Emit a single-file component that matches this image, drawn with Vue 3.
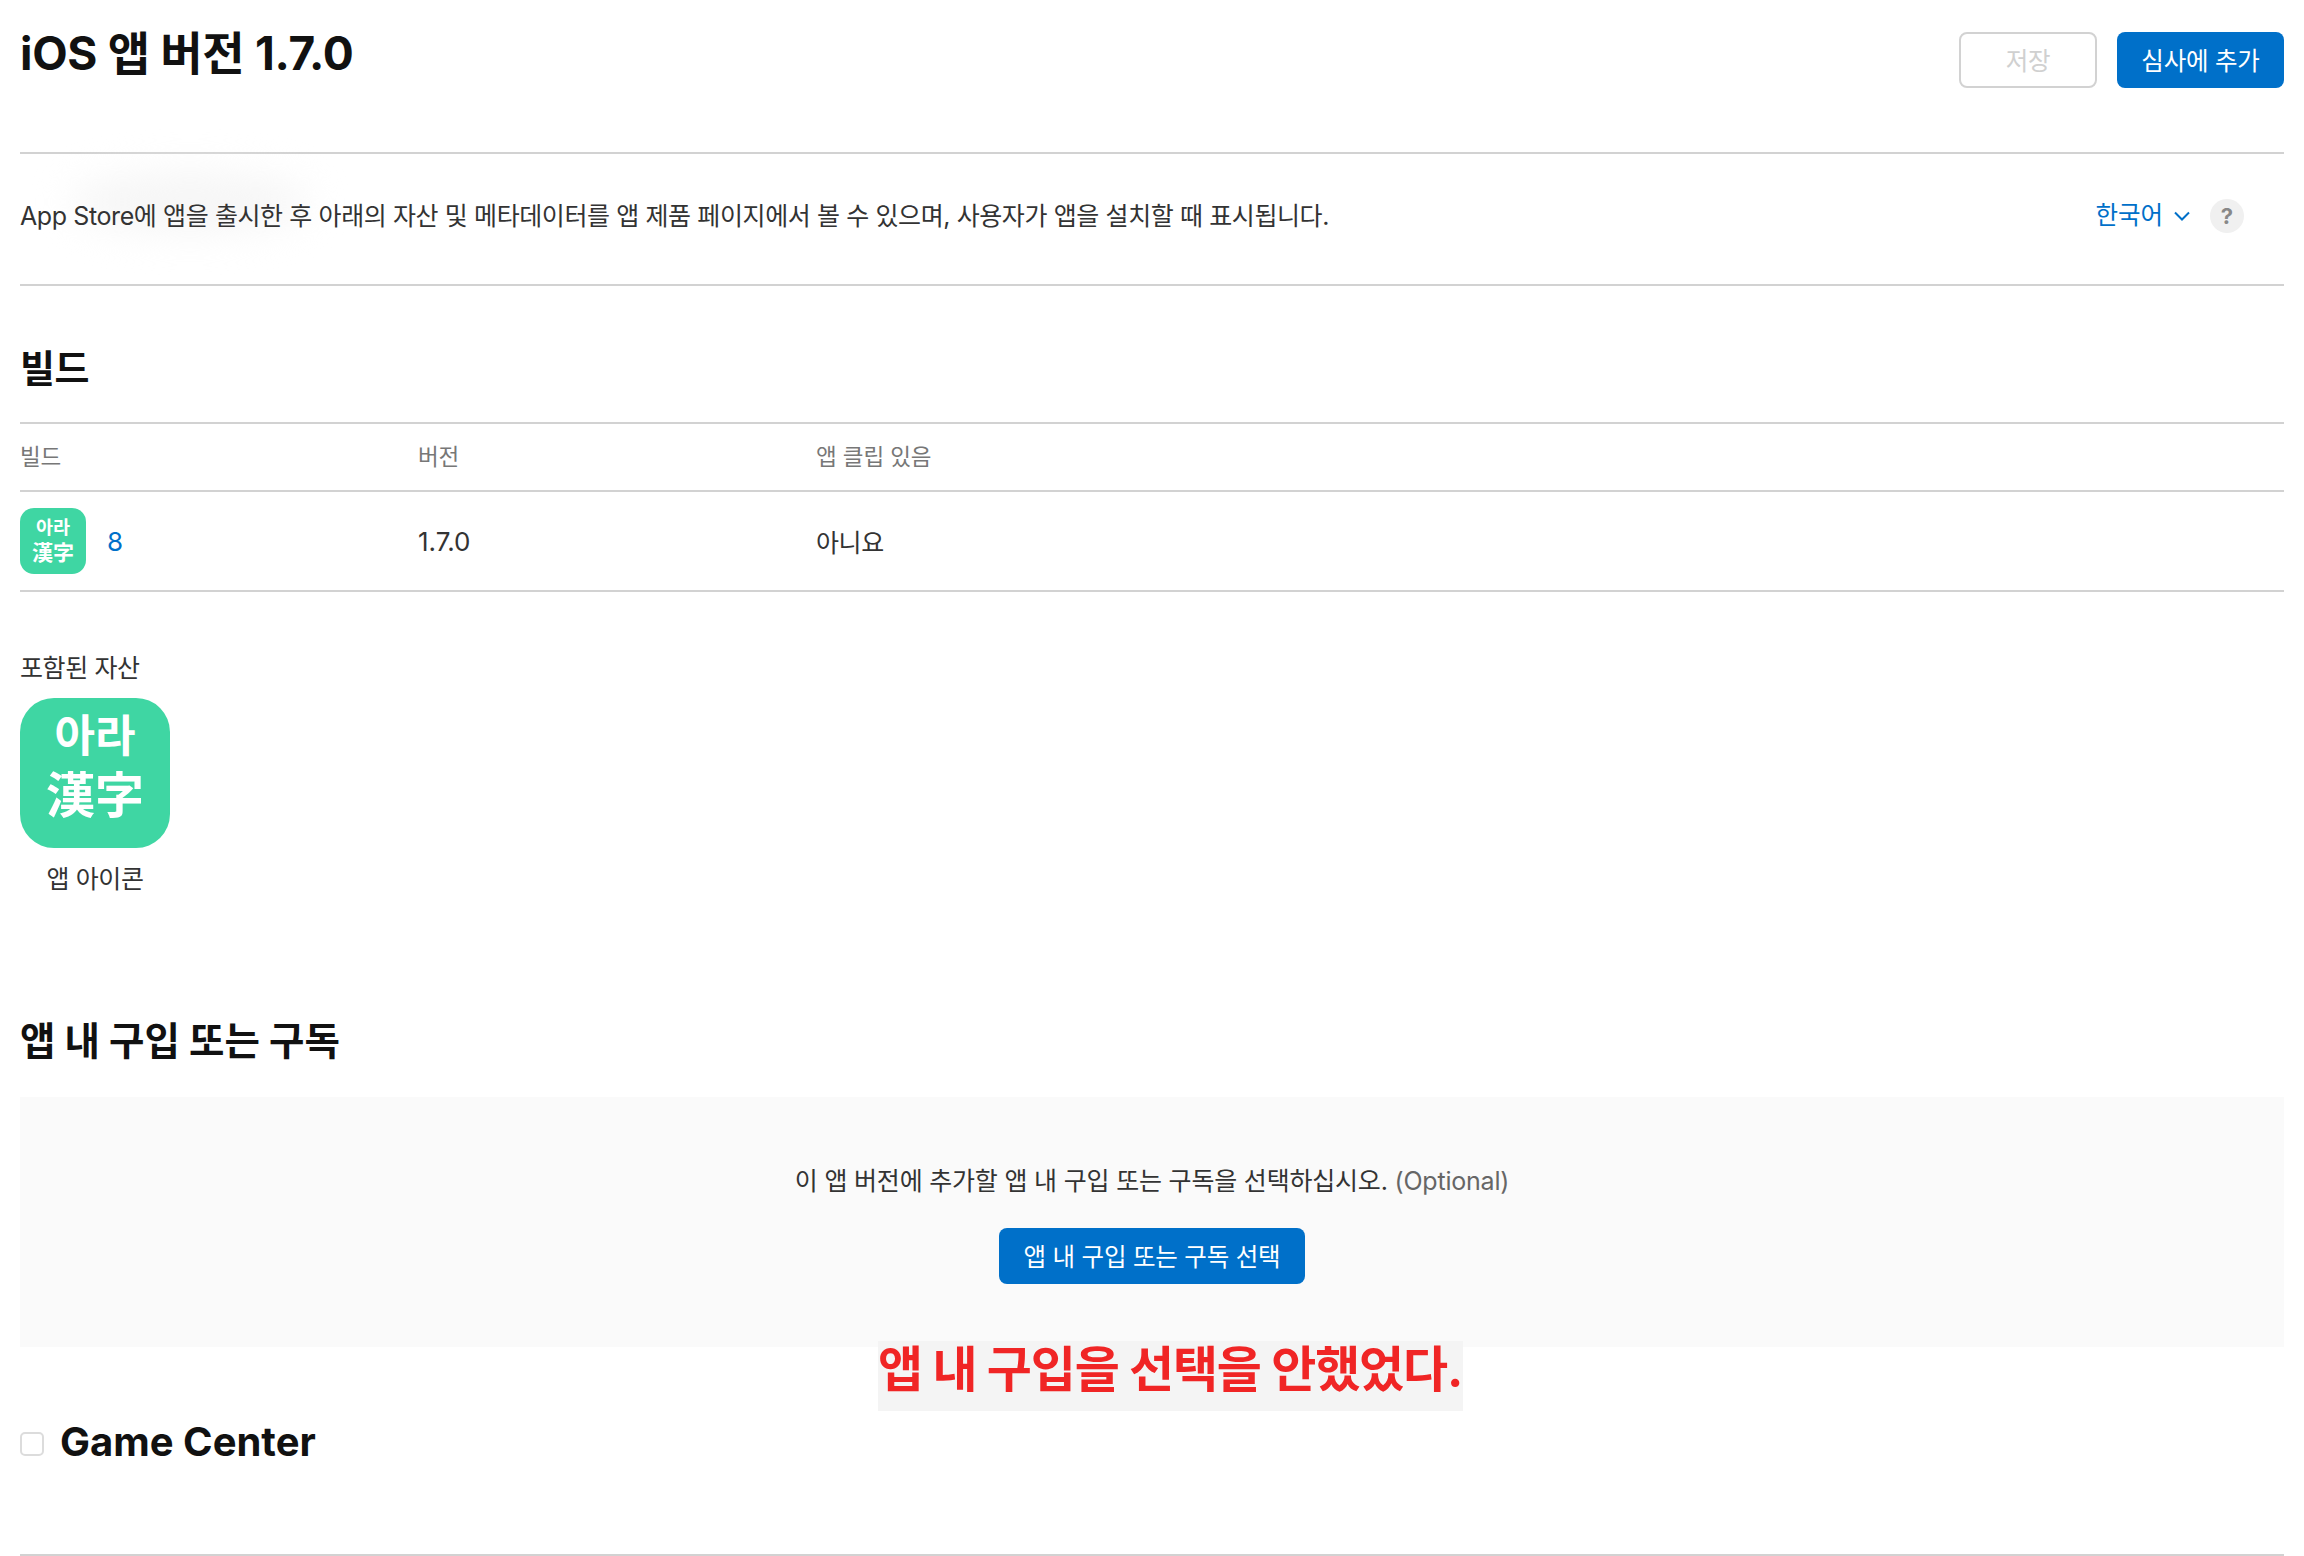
<script setup>
const columns = ["빌드", "버전", "앱 클립 있음"]
</script>

<template>
  <div class="page">
    <header class="top">
      <h1>iOS 앱 버전 1.7.0</h1>
      <div class="actions">
        <button class="btn save">저장</button>
        <button class="btn primary add">심사에 추가</button>
      </div>
    </header>

    <div class="intro">
      <div class="smudge"></div>
      <p>App Store에 앱을 출시한 후 아래의 자산 및 메타데이터를 앱 제품 페이지에서 볼 수 있으며, 사용자가 앱을 설치할 때 표시됩니다.</p>
      <div class="lang">
        <span>한국어</span>
        <svg width="16" height="10" viewBox="0 0 16 10"><path d="M1 1.5 8 8.5 15 1.5" fill="none" stroke="#0070c9" stroke-width="2"/></svg>
        <span class="help">?</span>
      </div>
    </div>

    <h2 class="build_title">빌드</h2>

    <div class="row head">
      <div v-for="c in columns" :key="c">{{ c }}</div>
    </div>
    <div class="row body">
      <div class="build_cell">
        <div class="app_icon small"><span class="ko">아라</span><span class="han">漢字</span></div>
        <a class="link">8</a>
      </div>
      <div class="version">1.7.0</div>
      <div>아니요</div>
    </div>

    <div class="assets_label">포함된 자산</div>
    <div class="asset">
      <div class="app_icon large"><span class="ko">아라</span><span class="han">漢字</span></div>
      <div class="asset_name">앱 아이콘</div>
    </div>

    <h2 class="iap_title">앱 내 구입 또는 구독</h2>
    <div class="iap_box">
      <p>이 앱 버전에 추가할 앱 내 구입 또는 구독을 선택하십시오. <span class="optional">(Optional)</span></p>
      <button class="btn primary choose">앱 내 구입 또는 구독 선택</button>
      <div class="note">앱 내 구입을 선택을 안했었다.</div>
    </div>

    <div class="game_center">
      <span class="check"></span>
      <h2>Game Center</h2>
    </div>
  </div>
</template>

<style>
html, body {
  background: #fff;
  overflow: hidden;
}
</style>

<style scoped>
.page {
  box-sizing: border-box;
  width: 2304px;
  height: 1556px;
  padding: 0 20px;
  overflow: hidden;
  color: #333;
  font-family: Inter, "Noto Sans CJK KR", sans-serif;
  font-size: 25px;
  letter-spacing: -0.4px;
}

h1, h2, p {
  margin: 0;
}

.top {
  display: flex;
  justify-content: space-between;
  align-items: flex-start;
  height: 152px;
  border-bottom: 2px solid #d2d2d2;
}

h1 {
  margin-top: 21px;
  font-size: 46px;
  line-height: 64px;
  font-weight: 700;
  color: #111;
  letter-spacing: -0.3px;
}

.actions {
  display: flex;
  gap: 20px;
  margin-top: 32px;
}

.btn {
  box-sizing: border-box;
  height: 56px;
  padding: 0 0 2px;
  border-radius: 8px;
  font-family: inherit;
  font-size: 24.5px;
  letter-spacing: -0.2px;
}

.save {
  width: 138px;
  background: #fff;
  border: 2px solid #d2d2d2;
  color: #d0d0d0;
}

.primary {
  background: #0070c9;
  border: none;
  color: #fff;
}

.add {
  width: 167px;
}

.intro {
  position: relative;
  box-sizing: border-box;
  display: flex;
  justify-content: space-between;
  align-items: center;
  height: 132px;
  padding-bottom: 11px;
  border-bottom: 2px solid #d2d2d2;
}

.intro p {
  position: relative;
}

.smudge {
  position: absolute;
  left: 50px;
  top: 18px;
  width: 240px;
  height: 60px;
  border-radius: 50%;
  background: #f6f6f6;
  filter: blur(18px);
}

.lang {
  display: flex;
  align-items: center;
  padding-right: 40px;
  color: #0070c9;
  font-size: 24.5px;
  letter-spacing: 0;
}

.lang svg {
  margin-left: 11px;
  margin-top: 4px;
}

.help {
  display: flex;
  justify-content: center;
  align-items: center;
  width: 34px;
  height: 34px;
  margin-left: 20px;
  margin-top: 5px;
  border-radius: 50%;
  background: #f0f0f0;
  color: #888;
  font-size: 22px;
  font-weight: 700;
}

.build_title {
  height: 138px;
  box-sizing: border-box;
  padding-top: 56px;
  border-bottom: 2px solid #d2d2d2;
  font-size: 38px;
  line-height: 52px;
  font-weight: 700;
  color: #111;
}

.row {
  display: grid;
  grid-template-columns: 398px 398px 1fr;
  align-items: center;
  border-bottom: 2px solid #d2d2d2;
}

.head {
  box-sizing: border-box;
  height: 68px;
  padding-bottom: 4px;
  color: #777;
  font-size: 22.5px;
  letter-spacing: -0.1px;
}

.body {
  height: 98px;
}

.version {
  font-size: 26px;
  letter-spacing: 0;
}

.build_cell {
  display: flex;
  align-items: center;
  gap: 21px;
}

.link {
  color: #0070c9;
  font-size: 26px;
}

.app_icon {
  display: flex;
  flex-direction: column;
  justify-content: center;
  align-items: center;
  background: #3fd6a3;
  color: #fff;
  font-weight: 700;
  letter-spacing: 0;
}

.app_icon.small {
  width: 66px;
  height: 66px;
  padding-bottom: 3px;
  box-sizing: border-box;
  border-radius: 14px;
  line-height: 26px;
}

.small .ko {
  font-size: 18.5px;
}

.small .han {
  font-size: 21px;
}

.app_icon.large {
  width: 150px;
  height: 150px;
  padding-bottom: 14px;
  box-sizing: border-box;
  border-radius: 34px;
  line-height: 60px;
}

.large .ko {
  font-size: 44px;
}

.large .han {
  font-size: 49px;
}

.assets_label {
  margin-top: 58px;
  line-height: 36px;
}

.asset {
  display: flex;
  flex-direction: column;
  align-items: center;
  width: 150px;
  margin-top: 12px;
}

.asset_name {
  margin-top: 13px;
  line-height: 36px;
}

.iap_title {
  margin-top: 118px;
  font-size: 38.5px;
  line-height: 52px;
  font-weight: 700;
  color: #111;
  letter-spacing: 0;
}

.iap_box {
  position: relative;
  display: flex;
  flex-direction: column;
  align-items: center;
  height: 250px;
  margin-top: 30px;
  background: #fafafa;
}

.iap_box p {
  margin-top: 66px;
  line-height: 36px;
  letter-spacing: -0.2px;
}

.optional {
  color: #666;
}

.choose {
  width: 306px;
  margin-top: 29px;
}

/* annotation pasted over the screenshot */
.note {
  position: absolute;
  left: 858px;
  top: 244px;
  box-sizing: border-box;
  width: 585px;
  height: 70px;
  background: #f4f4f4;
  color: #f02525;
  font-size: 49px;
  font-weight: 700;
  line-height: 58px;
  letter-spacing: -1.15px;
  white-space: nowrap;
}

.game_center {
  display: flex;
  align-items: flex-start;
  gap: 16px;
  height: 209px;
  border-bottom: 2px solid #d2d2d2;
  box-sizing: border-box;
}

.check {
  box-sizing: border-box;
  width: 24px;
  height: 24px;
  margin-top: 85px;
  border: 2px solid #dcdcdc;
  border-radius: 5px;
  background: #fff;
}

.game_center h2 {
  margin-top: 69px;
  font-size: 40px;
  line-height: 52px;
  font-weight: 700;
  color: #111;
  letter-spacing: 0;
}
</style>
